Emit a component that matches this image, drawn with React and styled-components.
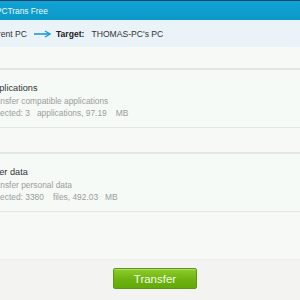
import styled, { createGlobalStyle } from "styled-components"

const GlobalStyle = createGlobalStyle`
  html, body {
    margin: 0;
    padding: 0;
    background: #f6f9f6;
  }
  body {
    font-family: "Liberation Sans", Arial, sans-serif;
  }
`

const categories = [
  {
    name: "Applications",
    desc: "Transfer compatible applications",
    count: "3",
    unit: "applications, 97.19",
    gapA: 7,
    gapB: 9,
  },
  {
    name: "User data",
    desc: "Transfer personal data",
    count: "3380",
    unit: "files, 492.03",
    gapA: 9,
    gapB: 7,
  },
]

const App = () => {
  return (
    <StWindow>
      <GlobalStyle />
      <StTitleBar>
        <StTitle>PCTrans Free</StTitle>
      </StTitleBar>

      <StRouteBar>
        <StSource>Current PC</StSource>
        <StArrow width="17" height="8" viewBox="0 0 17 8">
          <path d="M0 4 H15" stroke="#1a9bd2" strokeWidth="1.6" />
          <path d="M11 1 L16 4 L11 7" fill="none" stroke="#1a9bd2" strokeWidth="1.4" />
        </StArrow>
        <StLabel>Target:</StLabel>
        <StTarget>THOMAS-PC's PC</StTarget>
      </StRouteBar>

      <StList>
        {categories.map((c) => (
          <StCard key={c.name}>
            <StCardContent>
              <StCardTitle>{c.name}</StCardTitle>
              <StCardDesc>{c.desc}</StCardDesc>
              <StCardDesc>
                Selected: {c.count}
                <StGap $w={c.gapA} />
                {c.unit}
                <StGap $w={c.gapB} />
                MB
              </StCardDesc>
            </StCardContent>
          </StCard>
        ))}
      </StList>

      <StFooter>
        <StTransferButton>Transfer</StTransferButton>
      </StFooter>
    </StWindow>
  )
}

//-----styled-components-----

const StWindow = styled.div`
  width: 300px;
  height: 300px;
  overflow: hidden;
  display: flex;
  flex-direction: column;
  background: #f6f9f6;
`

// 상단 타이틀바
const StTitleBar = styled.div`
  height: 19px;
  border-top: 1px solid #23456a;
  background: linear-gradient(#11a3d4, #0a98c9);
  display: flex;
  align-items: center;
`

const StTitle = styled.span`
  margin-left: -4px;
  color: #eef8fc;
  font-size: 8.3px;
  white-space: nowrap;
`

// 소스 -> 타겟
const StRouteBar = styled.div`
  height: 27px;
  background: #e9f3f8;
  display: flex;
  align-items: center;
  font-size: 8.6px;
  color: #333;
  white-space: nowrap;
`

const StSource = styled.span`
  margin-left: -16px;
`

const StArrow = styled.svg`
  margin: 0 5px 0 7px;
`

const StLabel = styled.span`
  font-weight: bold;
  color: #222;
`

const StTarget = styled.span`
  margin-left: 7px;
`

const StList = styled.div`
  flex: 1;
  padding-top: 21px;
  display: flex;
  flex-direction: column;
  gap: 24px;
`

const StCard = styled.div`
  height: 57px;
  border-top: 2px solid #e2e6e1;
  border-bottom: 1px solid #e3e7e2;
  background: #f6faf6;
`

const StCardContent = styled.div`
  margin-left: -12px;
  padding-top: 11px;
  white-space: nowrap;
`

const StCardTitle = styled.div`
  font-size: 9.2px;
  line-height: 14px;
  color: #333;
`

const StCardDesc = styled.div`
  font-size: 8.4px;
  line-height: 12px;
  color: #9a9c9a;
`

const StGap = styled.span`
  display: inline-block;
  width: ${(p) => p.$w}px;
`

// 하단 버튼 영역
const StFooter = styled.div`
  height: 41px;
  background: #f3f4f2;
  border-top: 1px solid #eceeea;
  display: flex;
  justify-content: center;
  padding: 8px 0 0 10px;
  box-sizing: border-box;
`

const StTransferButton = styled.button`
  width: 84px;
  height: 21px;
  border: 1px solid #5a9a10;
  border-radius: 2px;
  background: linear-gradient(#8fcb2c, #6db410 55%, #62a80a);
  color: #f4fbe8;
  font-family: "Liberation Sans", Arial, sans-serif;
  font-size: 11.5px;
  padding: 0;
  box-shadow: inset 0 1px 0 rgba(255, 255, 255, 0.3);
`

export default App
